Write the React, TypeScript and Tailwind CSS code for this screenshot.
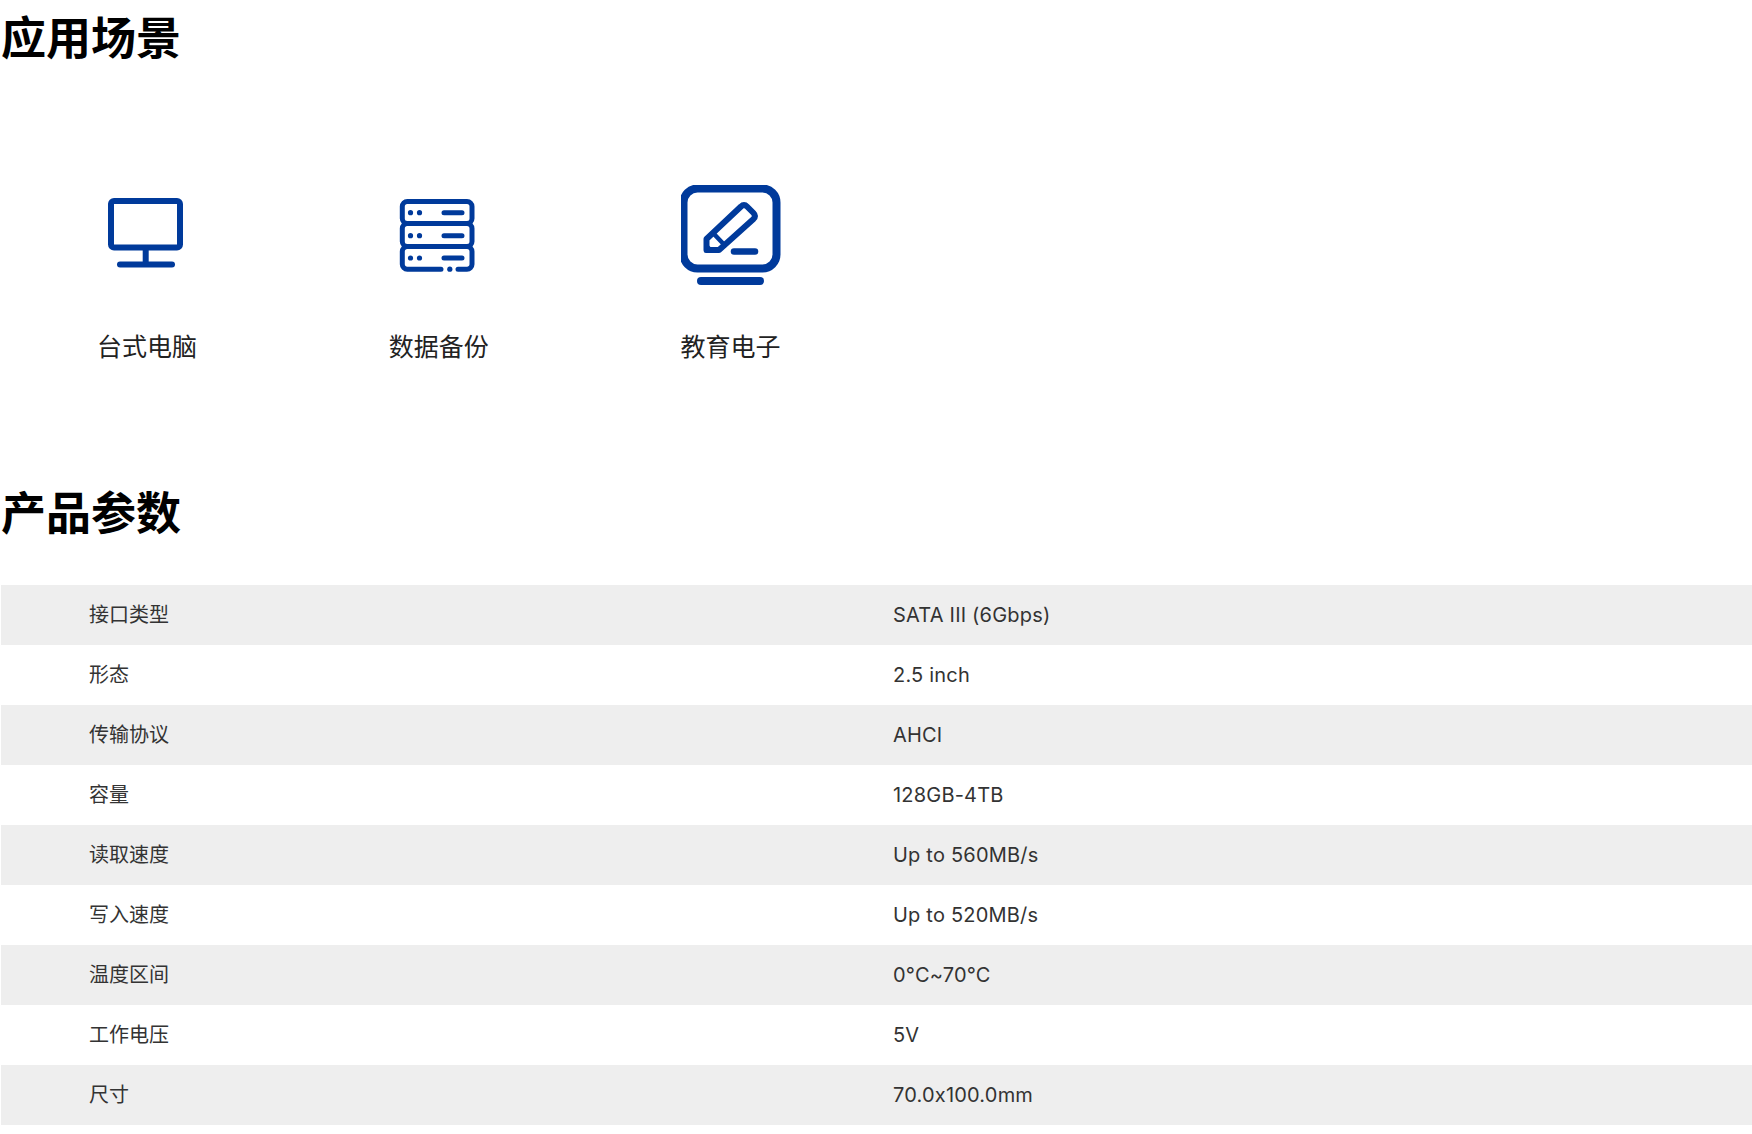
const font = { fontFamily: '"Inter", "Noto Sans CJK SC", sans-serif' };
const specs: [string, string][] = [
  ["接口类型", "SATA III (6Gbps)"],
  ["形态", "2.5 inch"],
  ["传输协议", "AHCI"],
  ["容量", "128GB-4TB"],
  ["读取速度", "Up to 560MB/s"],
  ["写入速度", "Up to 520MB/s"],
  ["温度区间", "0°C~70°C"],
  ["工作电压", "5V"],
  ["尺寸", "70.0x100.0mm"],
];
const blue = "#003a9b";
function Desktop() {
  return (
    <svg width="100" height="100" viewBox="0 0 100 100" fill="none" stroke={blue} strokeWidth="6" strokeLinecap="round" strokeLinejoin="round">
      <rect x="14" y="16" width="69" height="46.5" rx="3" />
      <path d="M48.7 63V79" />
      <path d="M23 79.5H75" strokeWidth="6" />
    </svg>
  );
}
function Backup() {
  return (
    <svg width="100" height="100" viewBox="0 0 100 100" fill="none" stroke={blue} strokeWidth="5" strokeLinecap="round" strokeLinejoin="round">
      <rect x="13.3" y="16.5" width="69.7" height="22" rx="5" />
      <rect x="13.3" y="38.5" width="69.7" height="23" rx="5" />
      <path d="M52 84.2H18.3a5 5 0 0 1-5-5V66.5a5 5 0 0 1 5-5H78a5 5 0 0 1 5 5V79.2a5 5 0 0 1-5 5H69" />
      <path d="M55 27.7H73M55 50.7H73M55 73H73" />
      <g fill={blue} stroke="none">
        <circle cx="21.5" cy="27.7" r="2.6" /><circle cx="30.5" cy="27.7" r="2.6" />
        <circle cx="21.5" cy="50.7" r="2.6" /><circle cx="30.5" cy="50.7" r="2.6" />
        <circle cx="21.5" cy="73" r="2.6" /><circle cx="30.5" cy="73" r="2.6" />
        <circle cx="60.8" cy="84.2" r="2.6" />
      </g>
    </svg>
  );
}
function Education() {
  return (
    <svg width="100" height="100" viewBox="0 0 100 100" fill="none" stroke={blue} strokeWidth="8" strokeLinecap="round" strokeLinejoin="round">
      <rect x="2.5" y="3.5" width="93" height="80" rx="14" />
      <path d="M25.5 65V54L60 21.5Q63 18.5 66 21.5L72.5 28Q75.5 31 72.5 34L38 65Z" strokeWidth="6" />
      <path d="M33 49L43 59.5" strokeWidth="4.5" />
      <path d="M23.5 67.5V56L35 67.5Z" fill={blue} stroke="none" />
      <path d="M53 66.5H74" strokeWidth="6.5" />
      <path d="M20 96H79" strokeWidth="8" />
    </svg>
  );
}
const scenes = [
  { label: "台式电脑", icon: <Desktop /> },
  { label: "数据备份", icon: <Backup /> },
  { label: "教育电子", icon: <Education /> },
];
export default function App() {
  return (
    <div className="w-[1752px] h-[1134px] bg-white pl-px overflow-hidden" style={font}>
      <h2 className="pt-px text-[45px] leading-[76px] font-bold text-black">应用场景</h2>
      <div className="grid grid-cols-6 mt-[108px]">
        {scenes.map((s) => (
          <div key={s.label} className="flex flex-col items-center">
            <div className="w-[100px] h-[100px]">{s.icon}</div>
            <div className="mt-[46px] text-[25px] leading-[32px] text-[#222222]">{s.label}</div>
          </div>
        ))}
      </div>
      <h2 className="mt-[113px] text-[45px] leading-[76px] font-bold text-black">产品参数</h2>
      <div className="mt-[33px]">
        {specs.map(([k, v], i) => (
          <div key={k} className={`grid grid-cols-[892px_1fr] h-[60px] items-center text-[20px] text-[#333333] ${i % 2 === 0 ? "bg-[#eeeeee]" : "bg-white"}`}>
            <div className="pl-[88px]">{k}</div>
            <div className="tracking-[0.2px]">{v}</div>
          </div>
        ))}
      </div>
    </div>
  );
}
